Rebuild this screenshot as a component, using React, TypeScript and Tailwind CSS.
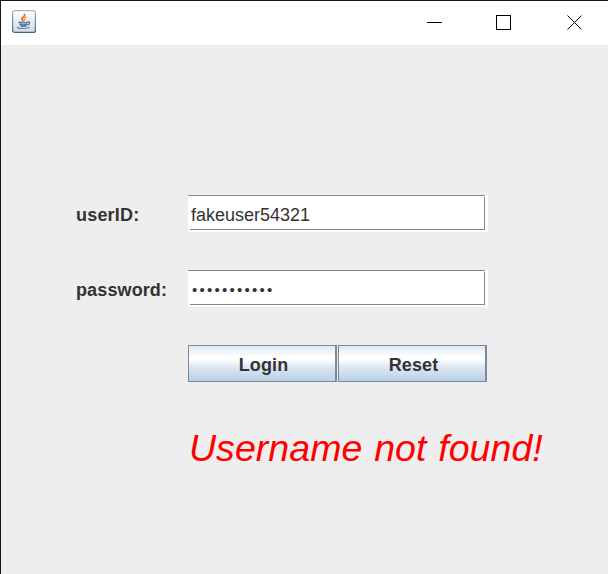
import type { ReactNode } from "react";

function JavaIcon() {
  return (
    <svg width="24" height="24" viewBox="0 0 24 24" className="shrink-0">
      <defs>
        <linearGradient id="tile" x1="0" y1="0" x2="0" y2="1">
          <stop offset="0" stopColor="#ffffff" />
          <stop offset="1" stopColor="#cfdbe3" />
        </linearGradient>
        <linearGradient id="edge" x1="0" y1="0" x2="0" y2="1">
          <stop offset="0" stopColor="#9fb6c4" />
          <stop offset="1" stopColor="#44687f" />
        </linearGradient>
      </defs>
      <rect x="0.6" y="0.6" width="22.8" height="21.8" rx="2" fill="url(#tile)" stroke="url(#edge)" strokeWidth="1.2" />
      <g fill="none" strokeLinecap="round">
        <path d="M12.6 4.6c1 1.800-3 2.800-2.700 4.700.2 1 1 1.400 1.300 2.100" stroke="#e8762c" strokeWidth="1.900" />
        <path d="M14 7.200c-1.800 1-2.300 1.500-1.600 2.400.4.600.2 1.200-.4 1.700" stroke="#ef9550" strokeWidth="1.300" />
        <path d="M7 12.300c2.600.7 6.200.7 8.600 0M7.800 14.200c2 .7 5.200.7 7.200 0M9 16c1.600.4 3.700.4 5.200 0" stroke="#4c779b" strokeWidth="1.400" />
        <path d="M15.800 12.100c2.300-1 2.700 1.900-.2 2.900" stroke="#4c779b" strokeWidth="1.200" />
        <path d="M5.500 17.300c-1 1.400 9.500 1.700 12 .1" stroke="#5c85a5" strokeWidth="1.100" />
      </g>
    </svg>
  );
}

function Field({ children }: { children: ReactNode }) {
  return (
    <div className="flex h-[37px] w-[300px] flex-col bg-white [clip-path:polygon(0_0,100%_0,100%_100%,1px_100%,1px_34px,0_34px)]">
      <div className="h-px w-[297px] bg-[#7a8a99]" />
      <div className="ml-0.5 mt-px flex h-[33px] w-[295px] items-center whitespace-nowrap border-b border-r border-[#7a8a99] pl-px">
        {children}
      </div>
    </div>
  );
}

function SwingButton({ children }: { children: ReactNode }) {
  return (
    <button className="h-[37px] w-[149px] border border-r-2 border-[#7a8a99] bg-linear-[to_bottom,#dde8f3_0%,#ffffff_30%,#ffffff_38%,#dde8f3_60%,#b8cfe5_100%] pl-[3px] pt-0.5 text-lg leading-none font-bold tracking-[0.1px]">
      {children}
    </button>
  );
}

export default function App() {
  return (
    <main className="h-[574px] w-[608px] overflow-hidden border-l border-t border-[#17151a] bg-[#eeeeee] font-['Liberation_Sans',Arial,sans-serif] text-[#333333]">
      <header className="flex h-11 items-start justify-between bg-white pl-[11px] pt-[9px]">
        <JavaIcon />
        <svg width="156" height="16" viewBox="0 0 156 16" className="mr-[26px] mt-[5px]" fill="none" stroke="#000000">
          <path d="M1 7.500h15M70.500.5h14v14h-14z" shapeRendering="crispEdges" />
          <path d="M141.500.5l14 14m0-14l-14 14" />
        </svg>
      </header>
      <section className="pl-[75px] pt-[150px]">
        <div className="grid grid-cols-[112px_300px] gap-y-[38px]">
          <label className="pt-[9px] text-lg leading-[22px] font-bold tracking-[0.2px]">userID:</label>
          <Field>
            <span className="pt-1 text-lg leading-none">fakeuser54321</span>
          </Field>
          <label className="pt-[9px] text-lg leading-[22px] font-bold tracking-[0.12px]">password:</label>
          <Field>
            <span className="pl-px pt-[3px] text-[15px] leading-none tracking-[2.25px]">•••••••••••</span>
          </Field>
          <div className="col-start-2 flex gap-px">
            <SwingButton>Login</SwingButton>
            <SwingButton>Reset</SwingButton>
          </div>
        </div>
        <p className="ml-[113px] mt-11 whitespace-nowrap text-[37.5px] leading-[44px] tracking-[0.04px] italic text-[#ff0000] [word-spacing:1.4px]">
          Username not found!
        </p>
      </section>
    </main>
  );
}
